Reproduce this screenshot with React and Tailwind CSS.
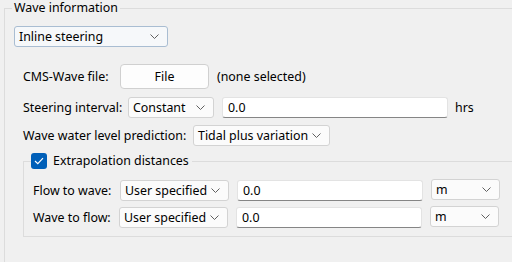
function Chevron() {
  return (
    <svg width="9" height="5" viewBox="0 0 9 5" className="shrink-0">
      <polyline points="0.5,0.5 4.5,4.5 8.5,0.5" fill="none" stroke="#606060" strokeWidth="1" />
    </svg>
  );
}

function Combo({ value, width, accent }) {
  return (
    <div
      className={`flex h-[21px] items-center justify-between rounded-[3px] border pl-[4px] pr-[8px] ${
        accent ? "border-[#a9bdd2] bg-[#f6f8fa]" : "border-[#d3d3d3] bg-[#fbfbfb]"
      }`}
      style={{ width }}
    >
      <span>{value}</span>
      <Chevron />
    </div>
  );
}

function TextBox({ value, width }) {
  return (
    <div
      className="flex h-[21px] items-center rounded-[3px] border border-[#e3e3e3] border-b-[#858585] bg-white pl-[5px]"
      style={{ width }}
    >
      {value}
    </div>
  );
}

function CheckBox() {
  return (
    <div className="flex h-[16px] w-[16px] items-center justify-center rounded-[3px] bg-[#005fb8]">
      <svg width="10" height="8" viewBox="0 0 10 8">
        <polyline points="1,4 3.8,6.6 9,1.2" fill="none" stroke="white" strokeWidth="1.2" />
      </svg>
    </div>
  );
}

export default function App() {
  return (
    <div
      className="h-[262px] w-[512px] overflow-hidden bg-[#f0f0f0] text-[12.4px] leading-[16px] text-black"
      style={{ fontFamily: '"Noto Sans", sans-serif' }}
    >
      <fieldset className="ml-[4px] h-[320px] w-[560px] border border-[#dcdcdc] pl-[9px]">
        <legend className="ml-[-2px] px-[2px] leading-[16px]">Wave information</legend>

        <div className="mt-[10px]">
          <Combo value="Inline steering" width="154px" accent />
        </div>

        <div className="ml-[9px] mt-[17px] flex items-center">
          <span className="w-[97px]">CMS-Wave file:</span>
          <div className="flex h-[25px] w-[89px] items-center justify-center rounded-[4px] border border-[#d0d0d0] bg-[#fdfdfd]">
            File
          </div>
          <span className="ml-[8px]">(none selected)</span>
        </div>

        <div className="ml-[9px] mt-[8px] flex items-center">
          <span className="w-[105px]">Steering interval:</span>
          <Combo value="Constant" width="86px" />
          <div className="ml-[8px]">
            <TextBox value="0.0" width="226px" />
          </div>
          <span className="ml-[7px]">hrs</span>
        </div>

        <div className="ml-[9px] mt-[7px] flex items-center">
          <span className="w-[170px]">Wave water level prediction:</span>
          <Combo value="Tidal plus variation" width="137px" />
        </div>

        <fieldset className="ml-[9px] mt-[7px] w-[540px] border border-[#dcdcdc] pb-[8px] pl-[9px]">
          <legend className="ml-[-2px] flex items-center pr-[3px] leading-[16px]">
            <CheckBox />
            <span className="ml-[6px]">Extrapolation distances</span>
          </legend>

          <div className="mt-[11px] flex items-center">
            <span className="w-[87px]">Flow to wave:</span>
            <Combo value="User specified" width="109px" />
            <div className="ml-[8px]">
              <TextBox value="0.0" width="186px" />
            </div>
            <div className="ml-[8px] -mt-[2px]">
              <Combo value="m" width="69px" />
            </div>
          </div>

          <div className="mt-[6px] flex items-center">
            <span className="w-[86px]">Wave to flow:</span>
            <Combo value="User specified" width="109px" />
            <div className="ml-[8px]">
              <TextBox value="0.0" width="186px" />
            </div>
            <div className="ml-[8px] -mt-[2px]">
              <Combo value="m" width="69px" />
            </div>
          </div>
        </fieldset>
      </fieldset>
    </div>
  );
}
